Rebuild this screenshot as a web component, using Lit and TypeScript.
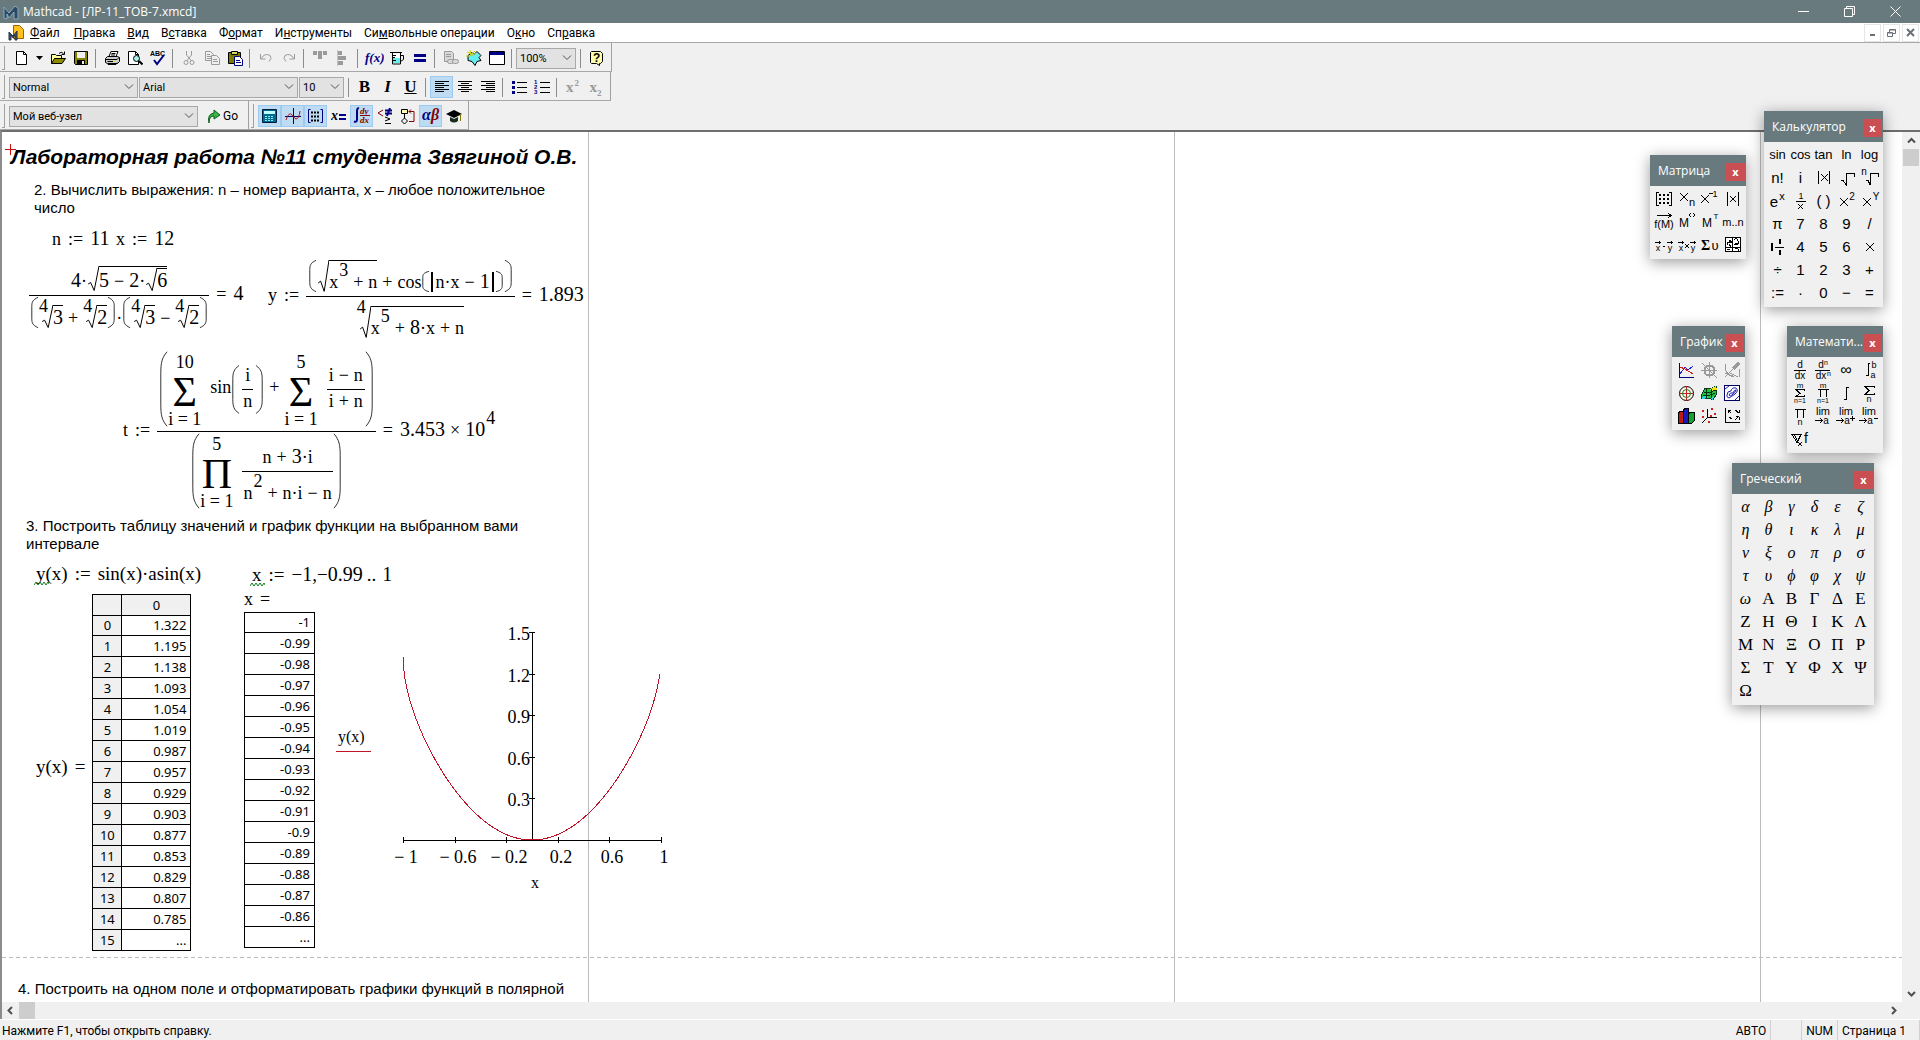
import { LitElement, html, css, svg, nothing, TemplateResult } from "lit";
import { customElement, property } from "lit/decorators.js";
import { classMap } from "lit/directives/class-map.js";
import { styleMap } from "lit/directives/style-map.js";

type Part = TemplateResult | string;

/* ---------- Icons ---------- */

const icon = (body: unknown, size = 16) =>
  html`<svg width=${size} height=${size} viewBox="0 0 ${size} ${size}" aria-hidden="true">${body}</svg>`;

const serif = "'Liberation Serif', serif";
const sans = "'Liberation Sans', sans-serif";

const icons: Record<string, TemplateResult> = {
  create: icon(svg`<path d="M3.5 1.5h7l3 3v10h-10z" fill="#fff" stroke="#000"/><path d="M10.5 1.5v3h3" fill="none" stroke="#000"/>`),
  open: icon(svg`<path d="M1.5 13.5v-9h4l1 1h5v3" fill="#ffff9c" stroke="#000"/><path d="M1.5 13.5l3-5h11l-3.5 5z" fill="#8c8c00" stroke="#000"/><path d="M9 3.5q2-2.5 4.5 0M14.5 1.5v3h-3" fill="none" stroke="#000"/>`),
  save: icon(svg`<path d="M1.5 1.5h13v13h-12l-1-1z" fill="#848400" stroke="#000"/><path d="M4 2h8v6H4z" fill="#efefef"/><path d="M4 10h8v4H4z" fill="#000"/><path d="M9 11h2v3H9z" fill="#efefef"/>`),
  print: icon(svg`<path d="M5 6.5l2-5h7l-2 5z" fill="#fff" stroke="#000"/><path d="M7.5 3.5h4M7 5h4" stroke="#000"/><path d="M1.5 8.5l2-2h10l2 1v4l-2 2h-10l-2-1z" fill="#ccc" stroke="#000"/><path d="M2 9.5h11M13 9.5l2-2M3.5 11.5h7M4 13.5v1h8l2-2" fill="none" stroke="#000"/><path d="M9 11h2v1H9z" fill="#e8e800"/>`),
  preview: icon(svg`<path d="M1.5 1.5h7l3 3v10h-10z" fill="#fff" stroke="#000"/><circle cx="9.5" cy="8.5" r="3" fill="#aee" stroke="#000"/><path d="M12 11l3.5 3.5" stroke="#000" stroke-width="2"/><path d="M8.5 1.5v3h3" fill="none" stroke="#000"/>`),
  spell: icon(svg`<text x="0" y="6" font-size="7" font-weight="700" font-family=${sans}>ABC</text><path d="M4 10l3 4 7-9" fill="none" stroke="#000084" stroke-width="2"/>`),
  cut: icon(svg`<g fill="none" stroke="#9a9a9a"><path d="M5.5 1v4l5 6M10.5 1v4l-5 6"/><circle cx="5" cy="12.5" r="2"/><circle cx="11" cy="12.5" r="2"/></g>`),
  copy: icon(svg`<g fill="#efefef" stroke="#9a9a9a"><path d="M1.5 1.5h5l3 3v6h-8z"/><path d="M3 4.5h3M3 6.5h4M3 8.5h4"/><path d="M7.5 5.5h5l3 3v6h-8z"/><path d="M9 9.5h4M9 11.5h5"/></g>`),
  paste: icon(svg`<path d="M1.5 2.5h12v11h-12z" fill="#7b7b00" stroke="#000"/><path d="M4.5 1.5h6v3h-6z" fill="#d8d860" stroke="#000"/><path d="M7.5 6.5h5l3 3v6h-8z" fill="#fff" stroke="#000084"/><path d="M9 10.5h4M9 12.5h5" stroke="#000084"/>`),
  undo: icon(svg`<path d="M2.5 4v5h5M3 8.5q4-6 9-3 2.5 3-1 6" fill="none" stroke="#9a9a9a"/>`),
  redo: icon(svg`<path d="M13.5 4v5h-5M13 8.5q-4-6-9-3-2.5 3 1 6" fill="none" stroke="#9a9a9a"/>`),
  across: icon(svg`<path d="M1 1h4v4H1zM6 1h4v8H6zM11 1h4v4h-4z" fill="#9a9a9a"/>`),
  down: icon(svg`<path d="M3 1h4v4H3zM3 6h8v4H3zM3 11h5v4H3z" fill="#9a9a9a"/><path d="M2.5 0v16" stroke="#c4c4c4"/>`),
  fx: icon(svg`<text x="1" y="14" font-size="13" font-weight="700" font-style="italic" fill="#000084" font-family=${serif}>f(x)</text>`, 20),
  unit: icon(svg`<path d="M1 2.5h12M3.5 3v11h8v-11" fill="#fff" stroke="#000"/><path d="M4 8h7v5H4z" fill="#6ee"/><path d="M12 5.5h2.5v4l-3 2M4 5.5h3M4 7.5h2M4 10.5h3" fill="none" stroke="#000"/>`),
  equals: icon(svg`<path d="M2 4h12v3H2zM2 9h12v3H2z" fill="#000084"/>`),
  link: icon(svg`<g fill="#d8d8d8" stroke="#9a9a9a"><path d="M1.5 1.5h7l2 2v8h-9z"/><path d="M3 4.5h5M3 6.5h5"/><rect x="4.5" y="9.5" width="6" height="4" rx="2"/><rect x="9.5" y="9.5" width="6" height="4" rx="2"/></g>`),
  component: icon(svg`<path d="M2 5.5l4-3 2 2 3-3 4 4-2 2 2 3-4 1-2 4-3-4-4-1z" fill="#6ee" stroke="#000"/><path d="M1 2l5 2 3-3M4 0l1 6 5-3M0 6l4 0" stroke="#cc0" fill="none"/>`),
  window: icon(svg`<path d="M.5 1.5h15v13h-15z" fill="#fff" stroke="#000"/><path d="M1 2h14v3H1z" fill="#000084"/>`),
  help: icon(svg`<path d="M2.5 1.5h9l2 2v8l-2 2h-1v2l-3-2h-5l-1-1v-10z" fill="#ffffae" stroke="#000"/><text x="4" y="12" font-size="12" font-weight="700" font-family=${sans}>?</text>`),
  left: icon(svg`<path d="M1 2.5h14M1 4.5h9M1 6.5h14M1 8.5h9M1 10.5h14M1 12.5h9" stroke="#000"/>`),
  center: icon(svg`<path d="M1 2.5h14M4 4.5h8M1 6.5h14M4 8.5h8M1 10.5h14M4 12.5h8" stroke="#000"/>`),
  right: icon(svg`<path d="M1 2.5h14M6 4.5h9M1 6.5h14M6 8.5h9M1 10.5h14M6 12.5h9" stroke="#000"/>`),
  bullets: icon(svg`<path d="M1 2h3v3H1zM1 7h3v3H1zM1 12h3v3H1z" fill="#000084"/><path d="M6 3.5h10M6 8.5h10M6 13.5h10" stroke="#000"/>`),
  numbers: icon(svg`<g font-size="6" font-weight="700" fill="#000084" font-family=${sans}><text x="0" y="5">1</text><text x="0" y="10">2</text><text x="0" y="15">3</text></g><path d="M6 3.5h10M6 8.5h10M6 13.5h10" stroke="#000"/>`),
  calc: icon(svg`<path d="M1.5 1.5h14v13h-14z" fill="#006c8c" stroke="#001c40"/><path d="M3 3h11v3H3z" fill="#bff"/><path d="M4 8.5h9M4 10.5h9M4 12.5h9" stroke="#8ef" stroke-dasharray="2 1"/>`, 17),
  graph: icon(svg`<path d="M0 8.5h16M8.5 0v16" stroke="#000060"/><path d="M1 12q3-9 6-5t4 4q3 0 4-8" fill="none" stroke="#b01020"/>`),
  matrix: icon(svg`<path d="M3.5 1.5h-2v13h2M13.5 1.5h2v13h-2" fill="none" stroke="#000084"/><path d="M4 4.5h9M4 8.5h9M4 12.5h9" stroke="#000" stroke-width="2" stroke-dasharray="2 1"/>`, 17),
  xeq: icon(svg`<text x="0" y="12" font-size="14" font-weight="700" font-style="italic" font-family=${serif}>x</text><path d="M8 6h7v2H8zM8 10h7v2H8z" fill="#000084"/>`),
  calculus: icon(svg`<path d="M6 1.5q-2-1-2 3v8q0 3-3 2" fill="none" stroke="#000084" stroke-width="2"/><g font-size="9" font-style="italic" font-weight="700" fill="#840000" font-family=${serif}><text x="7" y="7">dy</text><text x="7" y="16">dx</text></g><path d="M7 8.5h10" stroke="#840000"/>`, 18),
  boolean: icon(svg`<path d="M6 2l-5 3 5 3" fill="none" stroke="#840000"/><path d="M8 2.5h7M8 5.5h7M13 0l-3 8" stroke="#000084" stroke-width="2"/><path d="M8 9l5 2-5 2M8 15.5h6" fill="none" stroke="#000"/>`),
  program: icon(svg`<path d="M1.5 1.5h6v4h-6z" fill="#ffffae" stroke="#000"/><path d="M4.5 6v4M4.5 10l3 3-3 3-3-3z" fill="none" stroke="#000"/><path d="M9 3.5h5v10H9M9 3.5l2-2M9 3.5l2 2" fill="none" stroke="#840000"/>`),
  greek: icon(svg`<g font-size="16" font-style="italic" font-weight="700" font-family=${serif}><text x="1" y="14" fill="#000084">α</text><text x="10" y="14" fill="#840000">β</text></g>`, 20),
  symbolic: icon(svg`<path d="M0 6l8-4 8 4-8 4z" fill="#000"/><path d="M4 9v4q4 3 8 0v-4l-4 2z" fill="#1c2c1c"/><path d="M14.5 6v7" stroke="#7b7b00"/>`),
  go: icon(svg`<path d="M2 15q-2-9 5-10v-3l6 5-6 4v-3q-5 0-5 7z" fill="#3ab54a" stroke="#0c5c18"/>`),
  app: icon(svg`<path d="M1 14V3l5 6 6-7 3 2v11h-4V8l-5 6-2-4v5z" fill="#2c4a66" stroke="#8ab"/>`),
  doc: icon(svg`<path d="M5.5.5h6l4 4v9h-10z" fill="#ffc01c" stroke="#a06000"/><path d="M1 15V7l4 4 4-5v9H7v-5l-2 3-2-3v5z" fill="#456" stroke="#234"/>`),
};

const chevron = html`<svg class="chev" width="10" height="6" viewBox="0 0 10 6" aria-hidden="true"><path d="M1 .5l4 4 4-4" fill="none" stroke="#505050"/></svg>`;

/* ---------- Palette glyphs, 23px cells ---------- */

const glyph = (body: unknown) =>
  html`<svg width="22" height="22" viewBox="0 0 22 22" shape-rendering="crispEdges" aria-hidden="true">${body}</svg>`;
const t = (x: number, y: number, size: number, s: string, anchor = "middle") =>
  svg`<text x=${x} y=${y} font-size=${size} text-anchor=${anchor} font-family=${sans}>${s}</text>`;
const line = (d: string, color = "#000", width = 1) =>
  svg`<path d=${d} fill="none" stroke=${color} stroke-width=${width}/>`;

const matrixKeys: Part[] = [
  glyph([line("M6 4.5H3.5v13H6M16 4.5h2.5v13H16"), svg`<path d="M6 7h10M6 11h10M6 15h10" stroke="#000" stroke-width="2" stroke-dasharray="2 2"/>`]),
  glyph([line("M4 5l8 8M12 5l-8 8"), t(16, 18, 11, "n")]),
  glyph([line("M2 7l8 8M10 7l-8 8M10 5.5h4"), t(16, 9, 9, "1")]),
  glyph([line("M5.5 4v14M16.5 4v14M8 8l6 6M14 8l-6 6")]),
  glyph([t(11, 17, 11, "f(M)"), line("M4 4.5h14M15 2l3 2.5-3 2.5")]),
  glyph([t(8, 16, 12, "M"), line("M15 2l-2 2 2 2M17 2l2 2-2 2")]),
  glyph([t(8, 16, 12, "M"), t(17, 8, 8, "T")]),
  glyph([t(11, 15, 11, "m..n")]),
  glyph([t(5, 17, 9, "x"), t(17, 17, 9, "y"), line("M2 8.5h6M14 8.5h6M6 7v3M18 7v3M10 12.5h2")]),
  glyph([t(5, 17, 9, "x"), t(17, 17, 9, "y"), line("M2 8.5h6M14 8.5h6M6 7v3M18 7v3M9 10l4 4M13 10l-4 4")]),
  glyph([svg`<text x="2" y="16" font-size="14" font-weight="700" font-family=${serif}>Σ</text>`, t(16, 16, 13, "υ")]),
  glyph([svg`<path d="M3.5 3.5h15v14h-15z" fill="#fff" stroke="#000"/>`, line("M4 13.5h14M10.5 4v13M5 11l3-5 2 3M12 6q3-3 4 1t-4 4M5 15h3M13 15q3-2 4 2M5 8h4M7 10l2 3M13 9h4")]),
];

const calculatorKeys: Part[] = [
  "sin", "cos", "tan", "ln", "log",
  "n!", "i",
  glyph([line("M5.5 4v13M16.5 4v13M8 7l7 7M15 7l-7 7")]),
  glyph([line("M5 13.5h2l3 4V6.5h8v3")]),
  glyph([line("M7 13.5h2l2 4V6.5h8v3"), t(5, 8, 10, "n")]),
  glyph([t(7, 17, 15, "e"), t(15, 10, 11, "x")]),
  glyph([line("M6 11.5h10M8 14l5 5M13 14l-5 5"), t(11, 9, 9, "1")]),
  "( )",
  glyph([line("M4 8l8 8M12 8l-8 8"), t(16, 10, 10, "2")]),
  glyph([line("M4 8l8 8M12 8l-8 8"), t(17, 10, 10, "Y")]),
  "π", "7", "8", "9", "/",
  glyph([line("M5 7v8", "#000", 2), line("M8 11.5h9"), line("M13 3v5M13 14v5", "#000", 2)]),
  "4", "5", "6",
  glyph([line("M7 7l8 8M15 7l-8 8")]),
  "÷", "1", "2", "3", "+",
  ":=", "·", "0", "−", "=",
];

const gray = "#9a9a9a";
const graphKeys: Part[] = [
  glyph([line("M4.5 4v14H19", "#000084"), line("M5 15l5-7 3 3 5-4", "#2020d0"), line("M5 8l5 2 8 5", "#d02020")]),
  glyph([line("M3 11.5h16M11.5 3v16M4 4l15 15", gray), svg`<circle cx="11.5" cy="11.5" r="5" fill="none" stroke=${gray} stroke-width="2"/>`]),
  glyph([line("M4.5 5v6q3 6 8 7M4 18L18 4M4 14l8 3M9 14l8 4M18.5 10v8", gray), line("M12 10l6-6", gray, 4)]),
  glyph([svg`<circle cx="11.5" cy="11.5" r="7" fill="#fff8ec" stroke="#000" shape-rendering="auto"/>`, line("M4 11.5h15M11.5 4v15", "#c02020"), svg`<circle cx="11.5" cy="11.5" r="4" fill="none" stroke="#208020" shape-rendering="auto"/>`]),
  glyph([svg`<path d="M3 14l4-8 5 1 6-3 1 7-4 7-4-2-7 1z" fill="#20c040" stroke="#004020"/>`, svg`<path d="M12 7l6-3 1 4-5 2z" fill="#f0e020"/>`, svg`<path d="M4 15l5-3 1 4-6 1zM12 16l4-2-1 4z" fill="#20d8e0"/>`, line("M6 10l4 1 8-3M9 6l-1 10M14 7l-1 9M5 13l5 1 7-3", "#003010")]),
  glyph([svg`<path d="M3.5 3.5h15v15h-15z" fill="#fff" stroke="#000060"/>`, svg`<g shape-rendering="auto">${line("M6 13q0-4 4-4 1-4 5-3 3 3-1 6t-6 4q-3-1-2-3M8 13q1-3 4-2 1-3 3-3-1 3-4 5-2 2-3 0M4 7l4-3M14 18l4-4", "#2020b0")}</g>`]),
  glyph([svg`<path d="M3 9l2-3h3v12H3z" fill="#c01818" stroke="#000"/><path d="M8 6l2-3h3v15H8z" fill="#1818c0" stroke="#000"/><path d="M13 10l2-3h4v9l-2 2h-4z" fill="#18a030" stroke="#000"/>`]),
  glyph([line("M9.5 4v8.5H19M9 13l-5 5"), svg`<path d="M4 5h2v2H4zM13 3h2v2h-2zM16 8h2v2h-2zM4 11h2v2H4zM12 10h2v2h-2zM10 16h2v2h-2z" fill="#d02020"/>`]),
  glyph([line("M4.5 3v14.5H19M7 5l3 3M7 8V5h3M14 5l4 3M18 5v3M8 12l3 2M14 15l3-3M15 11l3 1v3")]),
];

const mathKeys: Part[] = [
  glyph([t(11, 9, 10, "d"), line("M5 11.5h12"), t(11, 20, 10, "dx")]),
  glyph([t(9, 9, 10, "d"), t(14, 6, 7, "n"), line("M3 11.5h15"), t(9, 20, 10, "dx"), t(17, 17, 7, "n")]),
  glyph([t(11, 16, 16, "∞")]),
  glyph([line("M12 4.5h-2v12h-2M10.5 5v12"), t(16, 9, 9, "b"), t(15, 19, 9, "a")]),
  glyph([t(11, 6, 8, "m"), line("M15 9V7.5H7l4 4-4 3h8V13"), t(11, 21, 7, "n=1")]),
  glyph([t(11, 6, 8, "m"), line("M6 7.5h11M8.5 8v7M14.5 8v7"), t(11, 21, 7, "n=1")]),
  glyph([line("M14 5.5h-2.5v12H9M11.5 5v12")]),
  glyph([line("M16 6V4.5H7l4 4-4 4h9V11"), t(11, 20, 9, "n")]),
  glyph([line("M6 4.5h11M8.5 5v8M14.5 5v8"), t(11, 20, 9, "n")]),
  glyph([t(11, 10, 11, "lim"), line("M3 15.5h7M8 13l2 2.5-2 2.5"), t(14, 19, 10, "a")]),
  glyph([t(11, 10, 11, "lim"), line("M1 15.5h7M6 13l2 2.5-2 2.5M15 13.5h5M17.5 11v5"), t(12, 19, 10, "a")]),
  glyph([t(11, 10, 11, "lim"), line("M1 15.5h7M6 13l2 2.5-2 2.5M16 13.5h4"), t(12, 19, 10, "a")]),
  glyph([line("M3 6.5h9l-4 8zM5 6l4 8"), line("M9 14l4 4M13 14l-4 4"), t(17, 15, 14, "f")]),
];

const greekLower = [..."αβγδεζηθικλμνξοπρστυϕφχψω"];
const greekUpper = [..."ΑΒΓΔΕΖΗΘΙΚΛΜΝΞΟΠΡΣΤΥΦΧΨΩ"];

@customElement("mc-palette")
class McPalette extends LitElement {
  @property() heading = "";
  @property({ type: Number }) columns = 4;
  @property({ attribute: false }) keys: Part[] = [];

  static styles = css`
    :host {
      display: block;
      background: #f0f0f0;
      box-shadow: 0 3px 14px rgba(0, 0, 0, 0.4);
      font-family: "Open Sans", "Noto Sans", sans-serif;
    }
    .bar {
      display: flex;
      align-items: center;
      justify-content: space-between;
      height: 31px;
      padding: 0 1px 0 8px;
      background: #687a7e;
      color: #fff;
      font-size: 12px;
      white-space: nowrap;
    }
    .bar button {
      width: 19px;
      height: 18px;
      margin-top: 3px;
      padding: 0;
      border: 0;
      background: #c94f52;
      color: #fff;
      font: 700 11px/16px "Open Sans", sans-serif;
    }
    .keys {
      display: grid;
      padding: 1px 2px 3px;
    }
    .key {
      display: grid;
      place-items: center;
      width: 23px;
      height: 23px;
      padding: 0;
      border: 0;
      background: none;
      color: #000;
      font: 15px/20px "Liberation Sans", sans-serif;
      white-space: nowrap;
    }
    .word {
      font-size: 13px;
    }
    .lower {
      font: italic 16px/20px "Liberation Serif", serif;
    }
    .upper {
      font: 17px/20px "Liberation Serif", serif;
    }
    .key:hover {
      background: #cce4f7;
    }
  `;

  private kind(k: Part) {
    const s = typeof k === "string" ? k : "";
    return classMap({
      key: true,
      lower: greekLower.includes(s) && this.columns === 6,
      upper: greekUpper.includes(s),
      word: /^[a-z]{2,}$/.test(s),
    });
  }

  render() {
    return html`
      <div class="bar"><span>${this.heading}</span><button aria-label="Закрыть">x</button></div>
      <div class="keys" style=${styleMap({ gridTemplateColumns: `repeat(${this.columns}, 23px)` })}>
        ${this.keys.map((k) => html`<button class=${this.kind(k)}>${k}</button>`)}
      </div>
    `;
  }
}

/* ---------- Formula builder ---------- */

const tx = (s: string) =>
  (s.match(/:=|[\d.]*\d|\.\.|[^\s]/g) ?? []).map((k) => {
    if (/\d/.test(k)) return html`<span class="num">${k}</span>`;
    if (k === ":=" || k === "=") return html`<span class="rel">${k}</span>`;
    if ("+−×".includes(k)) return html`<span class="op">${k}</span>`;
    if (k === "..") return html`<span class="range">..</span>`;
    return k === "~" ? "−" : k;
  });
const frac = (a: unknown, b: unknown) =>
  html`<span class="frac"><span class="over">${a}</span><span class="rule"></span><span class="under">${b}</span></span>`;
const power = (a: unknown, b: string) => html`${a}<sup>${b}</sup>`;
const hook = html`<span class="hook"><svg viewBox="0 0 10 100" preserveAspectRatio="none" aria-hidden="true"><path d="M1 72L3 66L6 98L10 0" vector-effect="non-scaling-stroke"/></svg></span>`;
const root = (body: unknown, index?: string) =>
  html`<span class="root">${index ? html`<span class="index">${index}</span>` : nothing}<span class=${index ? "radical low" : "radical"}>${hook}<span class="body">${body}</span></span></span>`;
const fence = html`<svg viewBox="0 0 10 100" preserveAspectRatio="none" aria-hidden="true"><path d="M9 1C3 9 2 16 2 30V70C2 84 3 91 9 99" vector-effect="non-scaling-stroke"/></svg>`;
const paren = (body: unknown, roomy = false) =>
  html`<span class="group"><span class="fence">${fence}</span><span class=${roomy ? "inner roomy" : "inner"}>${body}</span><span class="fence close">${fence}</span></span>`;
const abs = (body: unknown) => html`<span class="abs">${body}</span>`;
const big = (sign: string, top: string) =>
  html`<span class="big"><span class="limit">${top}</span><span class="sign">${sign}</span><span class="limit from">i = 1</span></span>`;

/* ---------- Plot ---------- */

const X0 = 403, X1 = 661, Y0 = 841, Y15 = 633;
const px = (x: number) => X0 + ((x + 1) / 2) * (X1 - X0);
const py = (y: number) => Y0 - (y / 1.5) * (Y0 - Y15);

const plot = () => {
  const samples = Array.from({ length: 200 }, (_, k) => -1 + k / 100)
    .map((x) => `${px(x)},${py(Math.sin(x) * Math.asin(x))}`)
    .join(" ");
  const xs = [-1, -0.6, -0.2, 0.2, 0.6, 1];
  const ys = [0.3, 0.6, 0.9, 1.2, 1.5];
  return html`<svg class="plot" width="345" height="280" viewBox="335 620 345 280" role="img" aria-label="y(x)">
    ${svg`
      <g stroke="#000" fill="none" shape-rendering="crispEdges">
        <path d="M${X0} ${Y0 + 0.5}H${X1 + 1}M532.5 ${Y15}V${Y0}"/>
        ${xs.map((x) => svg`<path d="M${Math.round(px(x)) + 0.5} 838v6"/>`)}
        ${ys.map((y) => svg`<path d="M529 ${Math.round(py(y)) + 0.5}h6"/>`)}
      </g>
      <g stroke="#c01428" fill="none" shape-rendering="crispEdges">
        <polyline points=${samples}/>
        <path d="M336 752.5h35"/>
      </g>
      <g font-size="18" text-anchor="end">
        ${ys.map((y) => svg`<text x="530" y=${Math.round(py(y)) + 8}>${y}</text>`)}
      </g>
      <g font-size="18" text-anchor="middle">
        ${xs.map((x) => svg`<text x=${Math.round(px(x)) + 3} y="864">${String(x).replace("-", "− ")}</text>`)}
      </g>
      <g font-size="16"><text x="338" y="743">y(x)</text><text x="531" y="889">x</text></g>
    `}
  </svg>`;
};

/* ---------- Worksheet ---------- */

const yValues = "1.322 1.195 1.138 1.093 1.054 1.019 0.987 0.957 0.929 0.903 0.877 0.853 0.829 0.807 0.785 ...".split(" ");
const xValues = "-1 -0.99 -0.98 -0.97 -0.96 -0.95 -0.94 -0.93 -0.92 -0.91 -0.9 -0.89 -0.88 -0.87 -0.86 ...".split(" ");

const wave = html`<svg class="wave" width="15" height="5" viewBox="0 0 15 5" aria-hidden="true"><path d="M0 4l2-3 2 3 2-3 2 3 2-3 2 3 2-3 1 2" fill="none" stroke="#108020"/></svg>`;

interface Region { x: number; y: number; kind: string; body: TemplateResult }

const regions: Region[] = [
  { x: 9, y: 12, kind: "headline", body: html`Лабораторная работа №11 студента Звягиной О.В.` },
  { x: 32, y: 49, kind: "note", body: html`2. Вычислить выражения: n – номер варианта, x – любое положительное<br />число` },
  { x: 50, y: 96, kind: "math", body: html`${tx("n := 11")}` },
  { x: 114, y: 96, kind: "math", body: html`${tx("x := 12")}` },
  {
    x: 27, y: 131, kind: "math",
    body: html`${frac(
      html`${tx("4 ·")}${root(html`${tx("5 − 2 ·")}${root(tx("6"))}`)}`,
      html`${paren(html`${root(tx("3"), "4")}${tx("+")}${root(tx("2"), "4")}`)}·${paren(html`${root(tx("3"), "4")}${tx("−")}${root(tx("2"), "4")}`)}`,
    )}${tx("= 4")}`,
  },
  {
    x: 266, y: 123, kind: "math",
    body: html`${tx("y :=")}${frac(
      paren(html`${root(html`${power("x", "3")}${tx("+ n")}`)}${tx("+")}cos${paren(abs(tx("n · x − 1")))}`),
      root(html`${power("x", "5")}${tx("+ 8 · x + n")}`, "4"),
    )}${tx("= 1.893")}`,
  },
  {
    x: 121, y: 219, kind: "math",
    body: html`${tx("t :=")}${frac(
      paren(html`${big("Σ", "10")}sin${paren(frac("i", "n"), true)}${tx("+")}${big("Σ", "5")}${frac(tx("i − n"), tx("i + n"))}`),
      paren(html`${big("Π", "5")}${frac(tx("n + 3 · i"), html`${power("n", "2")}${tx("+ n · i − n")}`)}`),
    )}${tx("= 3.453 ×")}${power(tx("10"), "4")}`,
  },
  { x: 24, y: 385, kind: "note", body: html`3. Построить таблицу значений и график функции на выбранном вами<br />интервале` },
  { x: 34, y: 432, kind: "math checked", body: html`<span>${tx("y(x) := sin(x)·asin(x)")}</span>${wave}` },
  { x: 250, y: 432, kind: "math checked", body: html`<span>${tx("x := ~1 ,~0.99 .. 1")}</span>${wave}` },
  { x: 242, y: 457, kind: "math", body: html`${tx("x =")}` },
  {
    x: 34, y: 462, kind: "math result",
    body: html`<span class="name">${tx("y(x) =")}</span>
      <table class="grid indexed">
        <thead><tr><th></th><th scope="col">0</th></tr></thead>
        <tbody>${yValues.map((v, k) => html`<tr><th scope="row">${k}</th><td>${v}</td></tr>`)}</tbody>
      </table>`,
  },
  {
    x: 242, y: 480, kind: "",
    body: html`<table class="grid plain"><tbody>${xValues.map((v) => html`<tr><td>${v}</td></tr>`)}</tbody></table>`,
  },
  { x: 333, y: 487, kind: "math", body: plot() },
  { x: 16, y: 848, kind: "note", body: html`4. Построить на одном поле и отформатировать графики функций в полярной` },
];

const menus: [string, string, string][] = [
  ["", "Ф", "айл"], ["", "П", "равка"], ["", "В", "ид"], ["В", "с", "тавка"], ["Ф", "о", "рмат"],
  ["И", "н", "струменты"], ["Си", "м", "вольные операции"], ["О", "к", "но"], ["Сп", "р", "авка"],
];

@customElement("app-root")
class AppRoot extends LitElement {
  static styles = css`
    :host {
      display: flex;
      flex-direction: column;
      position: relative;
      height: 100vh;
      overflow: hidden;
      background: #f0f0f0;
      color: #000;
      font: 12px/20px Roboto, "Noto Sans", sans-serif;
    }
    button, select {
      font: inherit;
      color: inherit;
    }
    .titlebar, .menubar {
      display: flex;
      align-items: center;
      box-sizing: border-box;
    }
    .titlebar {
      height: 23px;
      padding: 0 4px 0 3px;
      gap: 4px;
      background: #687a7e;
      color: #fff;
    }
    .caption {
      flex: 1;
      font-family: "Open Sans", sans-serif;
    }
    .win {
      display: grid;
      place-items: center;
      width: 42px;
      height: 23px;
      padding: 0;
      border: 0;
      background: none;
    }
    .menubar {
      height: 20px;
      padding: 0 1px 0 8px;
      gap: 2px;
      background: #fff;
      border-bottom: 1px solid #a8a8a8;
    }
    .menubar nav {
      display: flex;
      flex: 1;
    }
    .menu {
      padding: 0 6px;
      border: 0;
      background: none;
    }
    .menu:first-child {
      padding: 0 8px 0 4px;
    }
    .mdi {
      display: grid;
      place-items: center;
      width: 17px;
      height: 18px;
      padding: 0;
      border: 1px solid #e6e6e6;
      background: #fff;
    }
    .bars {
      display: flex;
      flex-direction: column;
      align-items: flex-start;
    }
    .strip {
      display: flex;
      align-items: center;
      height: 28px;
      border-bottom: 1px solid #a8a8a8;
    }
    .dock {
      display: flex;
      align-items: center;
      box-sizing: border-box;
      height: 28px;
      padding: 2px 3px 0 0;
      border-right: 1px solid #a0a0a0;
    }
    .grip {
      width: 2px;
      height: 23px;
      margin: 0 4px 0 2px;
      border-right: 1px solid #a0a0a0;
      border-bottom: 1px solid #a0a0a0;
    }
    .tool {
      display: grid;
      place-items: center;
      width: 23px;
      height: 22px;
      padding: 0;
      border: 0;
      background: none;
    }
    .tool.on {
      background: #bddcf4;
      box-shadow: inset 0 0 0 1px #9ccaf0;
    }
    .drop {
      display: grid;
      place-items: center;
      width: 14px;
      padding: 0;
      border: 0;
      background: none;
    }
    .sep {
      width: 1px;
      height: 19px;
      margin: 0 4px 0 3px;
      background: #8c8c8c;
    }
    .glyph {
      font: 700 17px/20px "Liberation Serif", serif;
    }
    .slant {
      font-style: italic;
    }
    .lined {
      text-decoration: underline;
    }
    .dim {
      color: #9a9a9a;
      font-size: 15px;
    }
    .dim sup, .dim sub {
      font-size: 9px;
      line-height: 0;
    }
    .dim sup {
      vertical-align: super;
    }
    .pick {
      display: grid;
      align-items: center;
      margin-right: 1px;
    }
    .pick select, .pick .chev {
      grid-area: 1 / 1;
    }
    .pick .chev {
      justify-self: end;
      margin-right: 4px;
      pointer-events: none;
    }
    .pick select {
      appearance: none;
      width: 100%;
      height: 21px;
      padding: 0 3px;
      border: 1px solid #a8a8a8;
      border-radius: 0;
      background: #e2e2e2;
      font-size: 11px;
    }
    .w-style { width: 129px; }
    .w-font { width: 159px; }
    .w-size { width: 45px; }
    .w-zoom { width: 60px; }
    .w-site { width: 189px; }
    .go {
      display: flex;
      align-items: center;
      margin: 0 7px 0 8px;
      padding: 0;
      border: 0;
      background: none;
    }
    .view {
      display: grid;
      grid-template: 1fr 17px / 1fr 18px;
      flex: 1;
      min-height: 0;
      border-top: 2px solid #6e6e6e;
      border-left: 2px solid #8c8c8c;
    }
    .sheet {
      position: relative;
      overflow: hidden;
      background:
        repeating-linear-gradient(90deg, transparent 0 585px, #bcbcbc 585px 586px) 1px 0,
        repeating-linear-gradient(90deg, #bcbcbc 0 4px, transparent 4px 7px) 0 825px / 100% 1px no-repeat,
        #fff;
    }
    .region {
      position: absolute;
      white-space: nowrap;
    }
    .cursor {
      position: absolute;
      left: 3px;
      top: 12px;
    }
    .headline {
      font: italic 700 21px/26px "Liberation Sans", sans-serif;
    }
    .note {
      font: 15px/18px "Liberation Sans", sans-serif;
    }
    .math {
      font: 18px/20px "Liberation Serif", serif;
    }
    .num { font-size: 20px; }
    .op { margin: 0 5px; }
    .rel { margin: 0 7px; }
    .range { margin: 0 6px 0 4px; }
    sup, .index {
      font-size: 18px;
    }
    sup {
      margin-left: 1px;
      vertical-align: 12px;
      line-height: 16px;
    }
    .frac, .big {
      display: inline-grid;
      grid-template-rows: 1fr auto 1fr;
      justify-items: center;
      vertical-align: middle;
    }
    .over {
      align-self: end;
      padding: 0 2px 4px;
    }
    .rule {
      width: 100%;
      height: 1px;
      background: #000;
    }
    .under {
      padding: 1px 1px 0;
    }
    .root, .radical, .group {
      display: inline-flex;
      align-items: flex-start;
    }
    .radical {
      align-self: baseline;
    }
    .index {
      line-height: 18px;
      margin-right: -7px;
    }
    .low {
      margin-top: 8px;
    }
    .body, .inner {
      align-self: baseline;
    }
    .body {
      border-top: 1px solid #000;
      padding-top: 1px;
    }
    .roomy {
      padding: 0 2px;
    }
    .hook, .fence {
      position: relative;
      align-self: stretch;
      width: 12px;
    }
    .fence {
      width: 9px;
    }
    .close {
      transform: scaleX(-1);
    }
    .hook svg, .fence svg {
      position: absolute;
      width: 100%;
      height: 100%;
      fill: none;
      stroke: #000;
    }
    .fence svg {
      stroke: #333;
    }
    .abs {
      margin: 0 1px;
      padding: 0 2px;
      border: solid #000;
      border-width: 0 2px;
    }
    .big {
      margin: 0 9px 0 0;
    }
    .limit {
      line-height: 16px;
      align-self: end;
    }
    .from {
      padding-top: 3px;
      align-self: start;
    }
    .sign {
      padding-top: 6px;
      font-size: 42px;
      line-height: 32px;
    }
    .checked, .result {
      display: flex;
      font-size: 19px;
    }
    .checked {
      flex-direction: column;
    }
    .wave {
      margin-top: -3px;
      margin-left: -2px;
    }
    .result {
      align-items: center;
    }
    .name {
      padding-bottom: 12px;
    }
    .grid {
      border-collapse: collapse;
      font: 13px/17px "Noto Sans", sans-serif;
    }
    .grid th, .grid td {
      padding: 0;
      border: 1px solid #000;
      box-sizing: border-box;
      font-weight: 400;
    }
    .grid tr {
      height: 21px;
    }
    .grid tbody tr:first-child {
      height: 20px;
    }
    .grid th {
      background: #f0f0f0;
    }
    .grid td {
      padding-right: 4px;
      text-align: right;
    }
    .indexed th:first-child { width: 29px; }
    .indexed td { width: 69px; }
    .plain td { width: 70px; }
    .plot {
      display: block;
    }
    .vbar, .hbar {
      display: flex;
      align-items: center;
      background: #f0f0f0;
    }
    .vbar {
      flex-direction: column;
    }
    .arrow {
      display: grid;
      place-items: center;
      width: 17px;
      height: 17px;
      padding: 0;
      border: 0;
      background: none;
    }
    .thumb {
      width: 16px;
      height: 17px;
      background: #cdcdcd;
    }
    .gap {
      flex: 1;
    }
    .status {
      display: flex;
      height: 20px;
      border-top: 1px solid #fff;
      line-height: 22px;
    }
    .hint {
      flex: 1;
      padding-left: 2px;
    }
    .cell {
      padding: 0 4px;
      border-right: 1px solid #d0d0d0;
    }
    .blank {
      width: 22px;
    }
    .page {
      width: 73px;
    }
    .floating {
      position: absolute;
    }
  `;

  private tool(name: string, label: string, on = false) {
    return html`<button class=${classMap({ tool: true, on })} aria-label=${label} title=${label}>${icons[name]}</button>`;
  }

  private pick(width: string, label: string, value: string) {
    return html`<span class="pick ${width}"><select aria-label=${label}><option>${value}</option></select>${chevron}</span>`;
  }

  private arrow(d: string, label: string) {
    return html`<button class="arrow" aria-label=${label}><svg width="9" height="9" viewBox="0 0 9 9"><path d=${d} fill="none" stroke="#505050" stroke-width="2"/></svg></button>`;
  }

  private win(d: string, label: string) {
    return html`<button class="win" aria-label=${label}><svg width="11" height="11" viewBox="0 0 11 11"><path d=${d} fill="none" stroke="#fff"/></svg></button>`;
  }

  private mdi(d: string, label: string, width = 2) {
    return html`<button class="mdi" aria-label=${label}><svg width="9" height="9" viewBox="0 0 9 9"><path d=${d} fill="none" stroke="#6a7078" stroke-width=${width}/></svg></button>`;
  }

  private palette(heading: string, columns: number, keys: Part[], right: number, top: number) {
    return html`<mc-palette class="floating" .heading=${heading} .columns=${columns} .keys=${keys}
      style=${styleMap({ right: `${right}px`, top: `${top}px` })}></mc-palette>`;
  }

  render() {
    const sep = html`<span class="sep"></span>`;
    const grip = html`<span class="grip"></span>`;
    return html`
      <header class="titlebar">
        ${icons.app}<span class="caption">Mathcad - [ЛР-11_ТОВ-7.xmcd]</span>
        ${this.win("M0 5.5h11", "Свернуть")}
        ${this.win("M.5 2.5h8v8h-8zM2.5 2V.5h8v8H9", "Восстановить")}
        ${this.win("M.5.5l10 10M10.5.5l-10 10", "Закрыть")}
      </header>
      <div class="menubar">
        ${icons.doc}
        <nav>${menus.map(([a, b, c]) => html`<button class="menu">${a}<u>${b}</u>${c}</button>`)}</nav>
        ${this.mdi("M2 7h5", "Свернуть документ")}
        ${this.mdi("M.5 4.5h5v4h-5zM2.5 4V1.5h6v4H6M2.5 2h6M.5 5h5", "Восстановить документ", 1)}
        ${this.mdi("M1 1l7 7M8 1l-7 7", "Закрыть документ")}
      </div>
      <div class="bars">
        <div class="strip"><div class="dock">${grip}
          ${this.tool("create", "Создать")}
          <button class="drop" aria-label="Шаблоны"><svg width="7" height="4" viewBox="0 0 7 4"><path d="M0 0h7L3.5 4z"/></svg></button>
          ${this.tool("open", "Открыть")}${this.tool("save", "Сохранить")}${sep}
          ${this.tool("print", "Печать")}${this.tool("preview", "Просмотр")}${this.tool("spell", "Орфография")}${sep}
          ${this.tool("cut", "Вырезать")}${this.tool("copy", "Копировать")}${this.tool("paste", "Вставить")}${sep}
          ${this.tool("undo", "Отменить")}${this.tool("redo", "Вернуть")}${sep}
          ${this.tool("across", "Выровнять по горизонтали")}${this.tool("down", "Выровнять по вертикали")}${sep}
          ${this.tool("fx", "Функция")}${this.tool("unit", "Единицы")}${this.tool("equals", "Вычислить")}${sep}
          ${this.tool("link", "Гиперссылка")}${this.tool("component", "Компонент")}${this.tool("window", "Окно")}${sep}
          ${this.pick("w-zoom", "Масштаб", "100%")}${sep}${this.tool("help", "Справка")}
        </div></div>
        <div class="strip"><div class="dock">${grip}
          ${this.pick("w-style", "Стиль", "Normal")}${this.pick("w-font", "Шрифт", "Arial")}${this.pick("w-size", "Размер", "10")}${sep}
          <button class="tool glyph">B</button><button class="tool glyph slant">I</button><button class="tool glyph lined">U</button>${sep}
          ${this.tool("left", "По левому краю", true)}${this.tool("center", "По центру")}${this.tool("right", "По правому краю")}${sep}
          ${this.tool("bullets", "Маркеры")}${this.tool("numbers", "Нумерация")}${sep}
          <button class="tool glyph dim"><span>x<sup>2</sup></span></button><button class="tool glyph dim"><span>x<sub>2</sub></span></button>
        </div></div>
        <div class="strip"><div class="dock">${grip}
          ${this.pick("w-site", "Адрес", "Мой веб-узел")}
          <button class="go">${icons.go}Go</button>
        </div><div class="dock">${grip}
          ${this.tool("calc", "Калькулятор", true)}${this.tool("graph", "График", true)}${this.tool("matrix", "Матрица", true)}
          ${this.tool("xeq", "Вычисления")}${this.tool("calculus", "Математический анализ", true)}${this.tool("boolean", "Логика")}
          ${this.tool("program", "Программирование")}${this.tool("greek", "Греческий", true)}${this.tool("symbolic", "Символика")}
        </div></div>
      </div>
      <main class="view">
        <div class="sheet">
          <svg class="cursor" width="11" height="11" viewBox="0 0 11 11" aria-hidden="true"><path d="M5.5 0v11M0 5.5h11" stroke="#d01010"/></svg>
          ${regions.map((r) => html`<div class="region ${r.kind}" style=${styleMap({ left: `${r.x}px`, top: `${r.y}px` })}>${r.body}</div>`)}
        </div>
        <div class="vbar">
          ${this.arrow("M1 6.5l3.5-3.5 3.5 3.5", "Вверх")}<span class="thumb"></span><span class="gap"></span>
          ${this.arrow("M1 3l3.5 3.5 3.5-3.5", "Вниз")}
        </div>
        <div class="hbar">
          ${this.arrow("M6 1l-3.5 3.5 3.5 3.5", "Влево")}<span class="thumb"></span><span class="gap"></span>
          ${this.arrow("M3 1l3.5 3.5-3.5 3.5", "Вправо")}
        </div>
      </main>
      <footer class="status">
        <span class="hint">Нажмите F1, чтобы открыть справку.</span>
        <span class="cell">АВТО</span><span class="cell blank"></span><span class="cell">NUM</span><span class="cell page">Страница 1</span>
      </footer>
      ${this.palette("Матрица", 4, matrixKeys, 174, 155)}
      ${this.palette("Калькулятор", 5, calculatorKeys, 37, 111)}
      ${this.palette("График", 3, graphKeys, 175, 326)}
      ${this.palette("Математи...", 4, mathKeys, 37, 326)}
      ${this.palette("Греческий", 6, [...greekLower, ...greekUpper], 46, 463)}
    `;
  }
}
